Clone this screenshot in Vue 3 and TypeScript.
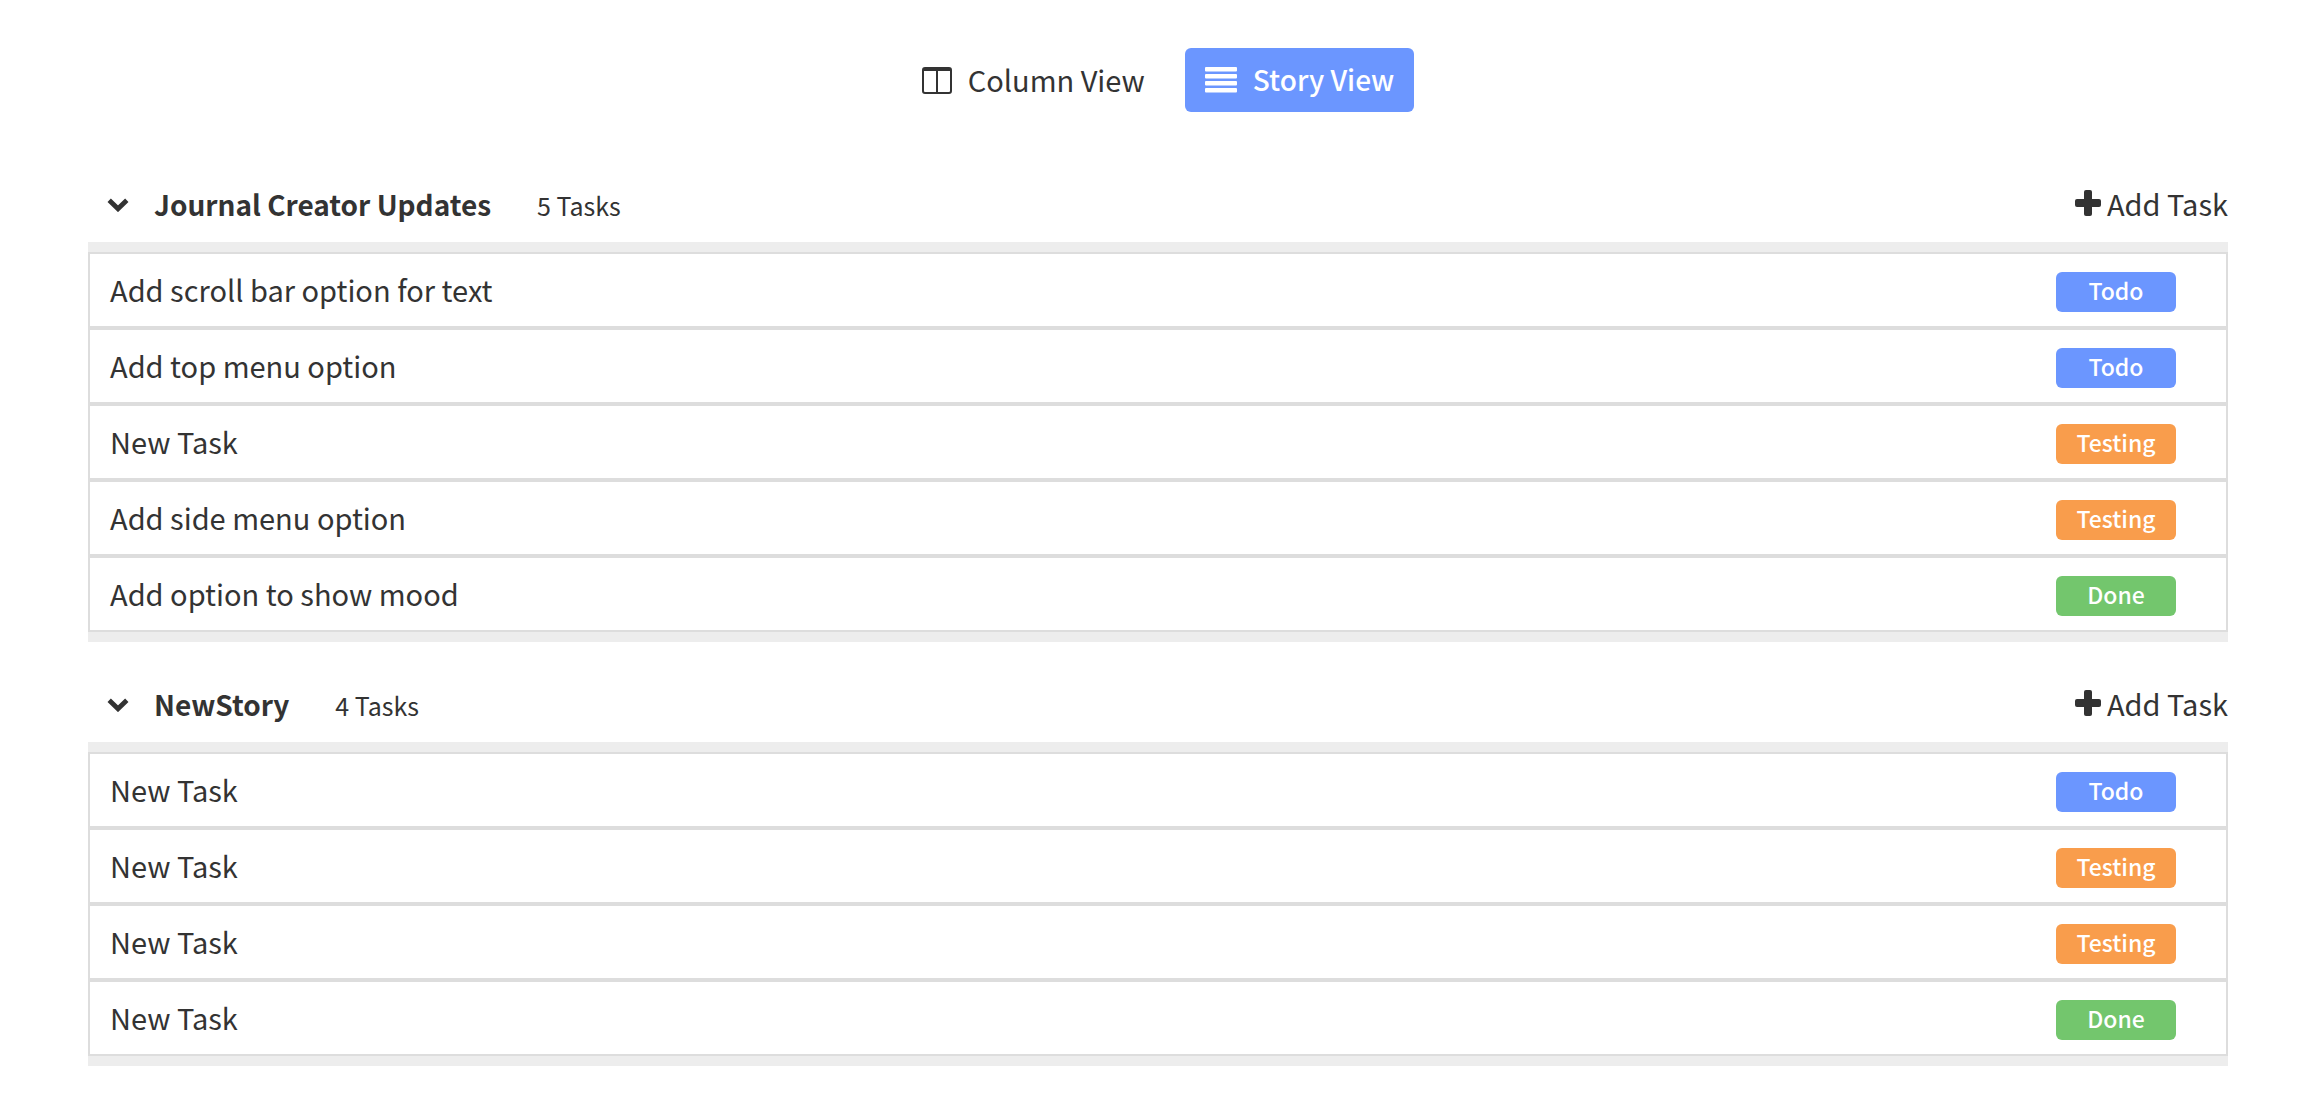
<script setup lang="ts">
import { ref } from 'vue'

type Status = 'Todo' | 'Testing' | 'Done'

interface Task {
  id: number
  name: string
  status: Status
}

interface Story {
  id: number
  title: string
  open: boolean
  tasks: Task[]
}

const stories = ref<Story[]>([
  {
    id: 1,
    title: 'Journal Creator Updates',
    open: true,
    tasks: [
      { id: 1, name: 'Add scroll bar option for text', status: 'Todo' },
      { id: 2, name: 'Add top menu option', status: 'Todo' },
      { id: 3, name: 'New Task', status: 'Testing' },
      { id: 4, name: 'Add side menu option', status: 'Testing' },
      { id: 5, name: 'Add option to show mood', status: 'Done' },
    ],
  },
  {
    id: 2,
    title: 'NewStory',
    open: true,
    tasks: [
      { id: 6, name: 'New Task', status: 'Todo' },
      { id: 7, name: 'New Task', status: 'Testing' },
      { id: 8, name: 'New Task', status: 'Testing' },
      { id: 9, name: 'New Task', status: 'Done' },
    ],
  },
])

let nextId = 10

function addTask(story: Story) {
  story.tasks.push({ id: nextId++, name: 'New Task', status: 'Todo' })
}
</script>

<template>
  <main class="board">
    <nav class="views">
      <button type="button" class="view">
        <svg width="30" height="28" viewBox="0 0 30 28" aria-hidden="true">
          <rect x="1" y="2" width="28" height="25" rx="2" fill="none" stroke="currentColor" stroke-width="2" />
          <path d="M1 2h28v3H1z M14 5h2v21h-2z" fill="currentColor" />
        </svg>
        <span>Column View</span>
      </button>
      <button type="button" class="view active">
        <svg width="32" height="28" viewBox="0 0 32 28" fill="currentColor" aria-hidden="true">
          <rect y="1" width="32" height="4.6" rx="1" />
          <rect y="8" width="32" height="4.6" rx="1" />
          <rect y="15" width="32" height="4.6" rx="1" />
          <rect y="22" width="32" height="4.6" rx="1" />
        </svg>
        <span>Story View</span>
      </button>
    </nav>

    <section v-for="story in stories" :key="story.id" class="story">
      <header class="story-head">
        <button type="button" class="toggle" :aria-label="story.title" :aria-expanded="story.open" @click="story.open = !story.open">
          <svg width="22" height="14" viewBox="0 0 22 14" aria-hidden="true">
            <path d="M2.2 2.2 11 10.8 19.8 2.2" fill="none" stroke="currentColor" stroke-width="4.8" />
          </svg>
        </button>
        <div class="heading">
          <h2 class="title">{{ story.title }}</h2>
          <span class="count">{{ story.tasks.length }} Tasks</span>
        </div>
        <button type="button" class="add" @click="addTask(story)">
          <svg width="26" height="26" viewBox="0 0 26 26" fill="currentColor" aria-hidden="true">
            <rect x="9" y="0" width="8" height="26" rx="2" />
            <rect x="0" y="9" width="26" height="8" rx="2" />
          </svg>
          <span>Add Task</span>
        </button>
      </header>
      <ul v-if="story.open" class="tasks">
        <li v-for="task in story.tasks" :key="task.id" class="task">
          <span class="name">{{ task.name }}</span>
          <span class="badge" :class="task.status.toLowerCase()">{{ task.status }}</span>
        </li>
      </ul>
    </section>
  </main>
</template>

<style>
body {
  margin: 0;
  background: #fff;
}
</style>

<style scoped>
.board {
  padding: 48px 74px 28px 88px;
  color: #333;
  font-family: "Noto Sans CJK SC", "Noto Sans", sans-serif;
  font-size: 29px;
}

button {
  padding: 0;
  border: 0;
  background: none;
  color: inherit;
  font: inherit;
  cursor: pointer;
}

.views {
  display: flex;
  justify-content: center;
  gap: 20px;
  padding-bottom: 30px;
}

.view {
  display: flex;
  align-items: center;
  gap: 16px;
  height: 64px;
  padding: 0 20px;
  border-radius: 6px;
}

.view span {
  padding-bottom: 2px;
  line-height: 62px;
}

.view.active {
  background: #6b96ff;
  color: #fff;
  font-size: 28px;
  font-weight: 500;
}

.story-head {
  display: flex;
  align-items: center;
  height: 78px;
  padding: 22px 0 0 19px;
  line-height: 78px;
}

.toggle {
  display: flex;
  width: 22px;
  margin-right: 25px;
  padding-top: 4px;
}

.heading {
  display: flex;
  align-items: baseline;
  gap: 46px;
  padding-top: 2px;
}

.title {
  margin: 0;
  font-size: 28px;
  font-weight: 700;
}

.count {
  font-size: 25px;
}

.add {
  display: flex;
  align-items: center;
  gap: 6px;
  margin-left: auto;
}

.tasks {
  margin: 0;
  padding: 10px 0;
  background: #ededed;
  list-style: none;
}

.task {
  display: flex;
  align-items: center;
  justify-content: space-between;
  padding: 0 50px 0 20px;
  border: 2px solid #ddd;
  background: #fff;
}

.name {
  padding-bottom: 2px;
  line-height: 70px;
}

.badge {
  width: 120px;
  height: 36px;
  margin-top: 4px;
  padding-bottom: 4px;
  border-radius: 6px;
  color: #fff;
  font-size: 23px;
  font-weight: 500;
  line-height: 36px;
  text-align: center;
}

.todo {
  background: #6b96ff;
}

.testing {
  background: #f99d4c;
}

.done {
  background: #73c66d;
}
</style>
